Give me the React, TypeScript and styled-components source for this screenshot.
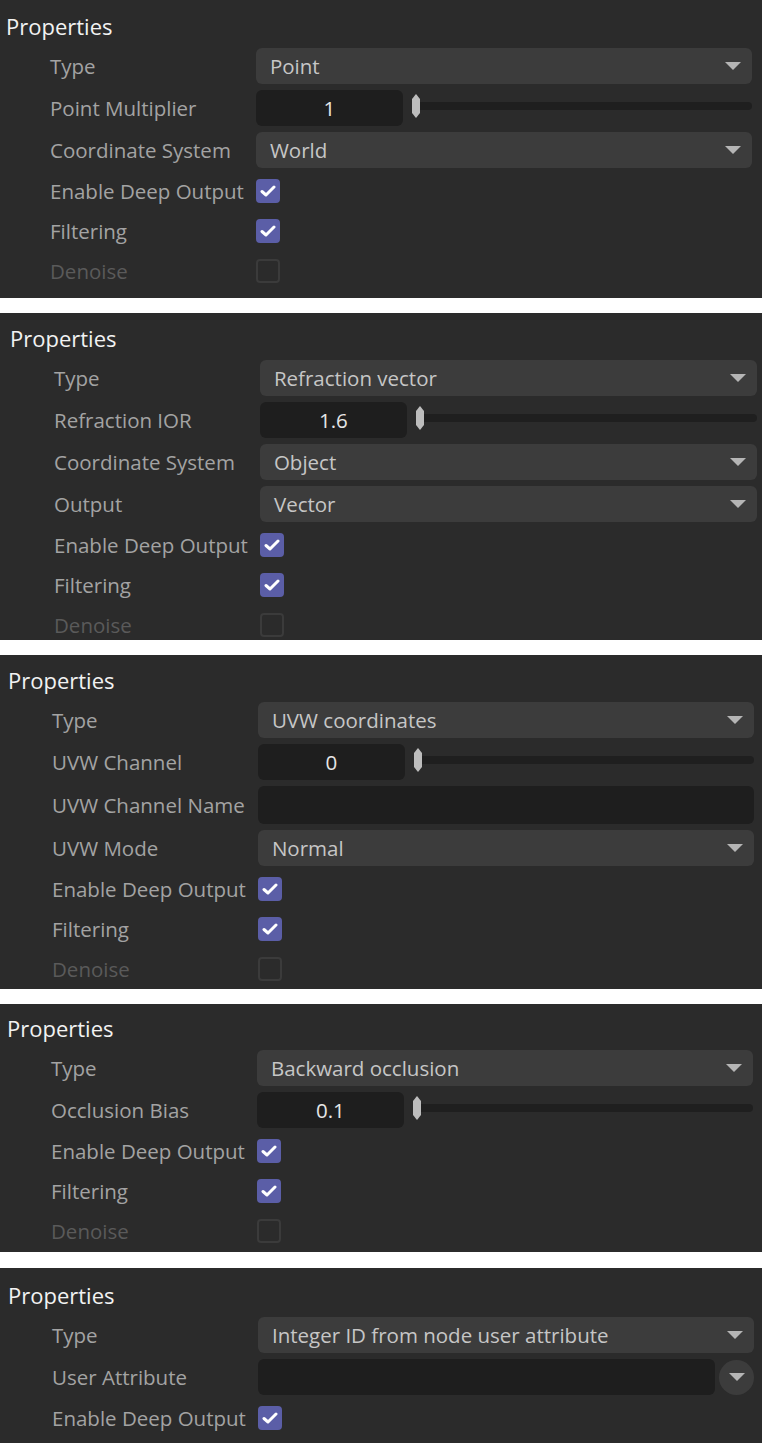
import React from 'react';
import styled, { createGlobalStyle } from 'styled-components';

const GlobalStyle = createGlobalStyle`
  html, body {
    margin: 0;
    padding: 0;
    background: #ffffff;
  }
  * {
    box-sizing: border-box;
  }
`;

const Page = styled.div`
  display: flex;
  flex-direction: column;
  gap: 15px;
  width: 762px;
  font-family: 'Open Sans', 'Noto Sans', sans-serif;
`;

const Panel = styled.section<{ $h: number; $pl: number; $pr: number; $pt: number }>`
  height: ${p => p.$h}px;
  background: #2b2b2b;
  padding: ${p => `${p.$pt}px ${p.$pr}px 0 ${p.$pl}px`};
  overflow: hidden;
`;

const Title = styled.h2`
  margin: 0 0 4px 0;
  height: 36px;
  line-height: 36px;
  font-size: 22px;
  font-weight: 400;
  color: #f2f2f2;
`;

const Grid = styled.div`
  display: grid;
  grid-template-columns: auto 1fr;
  column-gap: 12px;
  row-gap: 6px;
  padding-left: 44px;
`;

const Label = styled.div<{ $dim?: boolean }>`
  display: flex;
  align-items: center;
  font-size: 20.5px;
  white-space: nowrap;
  color: ${p => (p.$dim ? '#5a5a5a' : '#a3a3a3')};
`;

const Select = styled.div`
  height: 36px;
  display: flex;
  align-items: center;
  justify-content: space-between;
  padding: 0 11px 0 14px;
  border-radius: 6px;
  background: #3c3c3c;
  font-size: 20.5px;
  color: #c6c6c6;
`;

const Arrow = () => (
  <svg width="16" height="8" viewBox="0 0 16 8">
    <polygon points="0,0 16,0 8,8" fill="#b5b5b5" />
  </svg>
);

const SliderRow = styled.div`
  height: 36px;
  display: flex;
  align-items: center;
  gap: 9px;
`;

const NumberBox = styled.div`
  width: 147px;
  height: 36px;
  flex: none;
  display: flex;
  align-items: center;
  justify-content: center;
  border-radius: 6px;
  background: #1e1e1e;
  font-size: 20.5px;
  color: #e6e6e6;
`;

const Track = styled.div`
  position: relative;
  flex: 1;
  height: 8px;
  margin-top: -4px;
  border-radius: 4px;
  background: #1f1f1f;
`;

const Handle = styled.svg`
  position: absolute;
  left: 0;
  top: -8px;
`;

const TextInput = styled.div<{ $h?: number }>`
  height: ${p => p.$h ?? 36}px;
  flex: 1;
  border-radius: 6px;
  background: #1e1e1e;
`;

const AttrRow = styled.div`
  display: flex;
  align-items: center;
  gap: 4px;
`;

const RoundButton = styled.div`
  width: 35px;
  height: 35px;
  flex: none;
  display: flex;
  align-items: center;
  justify-content: center;
  border-radius: 50%;
  background: #3c3c3c;
`;

const CheckCell = styled.div`
  height: 34px;
  display: flex;
  align-items: center;
`;

const Box = styled.div<{ $on: boolean }>`
  width: 24px;
  height: 24px;
  border-radius: 4px;
  display: flex;
  align-items: center;
  justify-content: center;
  background: ${p => (p.$on ? '#5b5ea7' : 'transparent')};
  border: ${p => (p.$on ? 'none' : '2px solid #3b3b3b')};
`;

type Row =
  | { kind: 'select'; label: string; value: string }
  | { kind: 'number'; label: string; value: string }
  | { kind: 'text'; label: string }
  | { kind: 'attr'; label: string }
  | { kind: 'check'; label: string; on: boolean };

type PanelDef = { h: number; pl: number; pr: number; pt: number; rows: Row[] };

const checks: Row[] = [
  { kind: 'check', label: 'Enable Deep Output', on: true },
  { kind: 'check', label: 'Filtering', on: true },
  { kind: 'check', label: 'Denoise', on: false },
];

const panels: PanelDef[] = [
  {
    h: 298, pl: 6, pr: 10, pt: 8,
    rows: [
      { kind: 'select', label: 'Type', value: 'Point' },
      { kind: 'number', label: 'Point Multiplier', value: '1' },
      { kind: 'select', label: 'Coordinate System', value: 'World' },
      ...checks,
    ],
  },
  {
    h: 327, pl: 10, pr: 5, pt: 7,
    rows: [
      { kind: 'select', label: 'Type', value: 'Refraction vector' },
      { kind: 'number', label: 'Refraction IOR', value: '1.6' },
      { kind: 'select', label: 'Coordinate System', value: 'Object' },
      { kind: 'select', label: 'Output', value: 'Vector' },
      ...checks,
    ],
  },
  {
    h: 334, pl: 8, pr: 8, pt: 7,
    rows: [
      { kind: 'select', label: 'Type', value: 'UVW coordinates' },
      { kind: 'number', label: 'UVW Channel', value: '0' },
      { kind: 'text', label: 'UVW Channel Name' },
      { kind: 'select', label: 'UVW Mode', value: 'Normal' },
      ...checks,
    ],
  },
  {
    h: 248, pl: 7, pr: 9, pt: 6,
    rows: [
      { kind: 'select', label: 'Type', value: 'Backward occlusion' },
      { kind: 'number', label: 'Occlusion Bias', value: '0.1' },
      ...checks,
    ],
  },
  {
    h: 175, pl: 8, pr: 8, pt: 9,
    rows: [
      { kind: 'select', label: 'Type', value: 'Integer ID from node user attribute' },
      { kind: 'attr', label: 'User Attribute' },
      { kind: 'check', label: 'Enable Deep Output', on: true },
    ],
  },
];

const Check = () => (
  <svg width="16" height="12" viewBox="0 0 16 12">
    <polyline points="2,6.5 6,10 14,2" fill="none" stroke="#ffffff" strokeWidth="3" strokeLinecap="round" strokeLinejoin="round" />
  </svg>
);

const Control = ({ row }: { row: Row }) => {
  switch (row.kind) {
    case 'select':
      return (
        <Select>
          <span>{row.value}</span>
          <Arrow />
        </Select>
      );
    case 'number':
      return (
        <SliderRow>
          <NumberBox>{row.value}</NumberBox>
          <Track>
            <Handle width="8" height="24" viewBox="0 0 8 24">
              <polygon points="4,0 8,5 8,19 4,24 0,19 0,5" fill="#bdbdbd" />
            </Handle>
          </Track>
        </SliderRow>
      );
    case 'text':
      return <TextInput $h={38} />;
    case 'attr':
      return (
        <AttrRow>
          <TextInput />
          <RoundButton>
            <Arrow />
          </RoundButton>
        </AttrRow>
      );
    case 'check':
      return (
        <CheckCell>
          <Box $on={row.on}>{row.on && <Check />}</Box>
        </CheckCell>
      );
  }
};

export default function App() {
  return (
    <>
      <GlobalStyle />
      <Page>
        {panels.map((p, i) => (
          <Panel key={i} $h={p.h} $pl={p.pl} $pr={p.pr} $pt={p.pt} style={i === 4 ? { marginTop: 1 } : undefined}>
            <Title>Properties</Title>
            <Grid>
              {p.rows.map(r => (
                <React.Fragment key={r.label}>
                  <Label $dim={r.kind === 'check' && !r.on}>{r.label}</Label>
                  <Control row={r} />
                </React.Fragment>
              ))}
            </Grid>
          </Panel>
        ))}
      </Page>
    </>
  );
}
